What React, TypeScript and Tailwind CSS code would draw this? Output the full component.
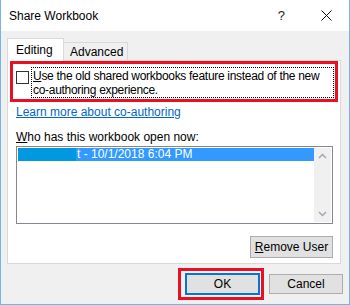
import React from "react";

// Excel "Share Workbook" dialog with the annotation boxes around the checkbox and OK.
const font = { fontFamily: '"Segoe UI", "Liberation Sans", Arial, sans-serif' };

function Chevron({ up }: { up?: boolean }) {
  return (
    <svg width="9" height="6" viewBox="0 0 9 6" className="text-[#a6a6a6]">
      <path
        d={up ? "M1 5 L4.5 1.5 L8 5" : "M1 1 L4.5 4.5 L8 1"}
        fill="none"
        stroke="currentColor"
        strokeWidth="1.5"
      />
    </svg>
  );
}

export default function App() {
  return (
    <div
      className="flex h-[305px] w-[350px] flex-col border-x border-b border-[#74b3ef] bg-[#f0f0f0] text-[12px] text-black"
      style={font}
    >
      {/* title bar */}
      <div className="flex h-[31px] items-center bg-white pl-[8px]">
        <span className="flex-1">Share Workbook</span>
        <span className="mr-[36px] text-[13px] text-[#222]">?</span>
        <svg width="11" height="11" viewBox="0 0 11 11" className="mr-[17px]">
          <path d="M0.5 0.5 L10.5 10.5 M10.5 0.5 L0.5 10.5" stroke="#111" strokeWidth="1" />
        </svg>
      </div>

      <div className="flex flex-col pl-[6px] pr-[8px] pt-[7px]">
        {/* tabs */}
        <div className="relative z-10 -mb-px flex items-end">
          <div className="flex h-[23px] w-[57px] items-center border border-b-0 border-[#d9d9d9] bg-white pl-[8px] pb-[1px]">
            Editing
          </div>
          <div className="flex h-[19px] w-[64px] items-center border border-l-0 border-[#d9d9d9] bg-[#f0f0f0] pl-[6px]">
            Advanced
          </div>
        </div>

        {/* panel */}
        <div className="flex h-[204px] flex-col border border-[#d9d9d9] bg-white pl-[2px] pr-[2px]">
          <div className="flex h-[41px] items-start border-[3px] border-[#e81123] pl-[3px] pr-[1px] pt-[3px]">
            <div className="mt-[4px] h-[13px] w-[13px] shrink-0 border border-[#333] bg-white" />
            <div className="ml-[2px] h-[31px] flex-1 whitespace-nowrap border border-dotted border-black pl-[1px] pt-[1px] leading-[14px] tracking-[-0.3px]">
              <span className="underline">U</span>se the old shared workbooks feature instead of the new
              <br />
              co-authoring experience.
            </div>
          </div>

          <div className="ml-[6px] mt-[2px] leading-[16px]">
            <span className="text-[#0066cc] underline">Learn more about co-authoring</span>
          </div>

          <div className="ml-[6px] mt-[10px] leading-[14px]">
            <span className="underline">W</span>ho has this workbook open now:
          </div>

          <div className="ml-[6px] mr-[5px] mt-[2px] flex h-[78px] border border-[#828790] p-px">
            <div className="flex-1">
              <div className="flex h-[13px] items-center leading-[13px] text-white">
                <div className="h-full w-[58px] bg-[#0098de]" />
                <div className="flex h-full flex-1 items-center bg-[#3399ff] pl-[1px]">
                  t - 10/1/2018 6:04 PM
                </div>
              </div>
            </div>
            <div className="flex w-[17px] flex-col items-center justify-between bg-[#f0f0f0] py-[5px]">
              <Chevron up />
              <Chevron />
            </div>
          </div>

          <div className="mr-[5px] mt-[12px] flex justify-end">
            <button className="flex h-[22px] w-[83px] items-center justify-center border border-[#adadad] bg-[#e1e1e1]">
              <span className="underline">R</span>emove User
            </button>
          </div>
        </div>

        {/* bottom buttons */}
        <div className="mt-[4px] flex items-start justify-end">
          <div className="border-[3px] border-[#e81123] py-[2px] pl-[4px] pr-[1px]">
            <button className="flex h-[22px] w-[75px] items-center justify-center border-2 border-[#0078d7] bg-[#e1e1e1]">
              OK
            </button>
          </div>
          <button className="-mr-[2px] ml-[5px] mt-[6px] flex h-[20px] w-[74px] items-center justify-center border border-[#adadad] bg-[#e1e1e1]">
            Cancel
          </button>
        </div>
      </div>
    </div>
  );
}
